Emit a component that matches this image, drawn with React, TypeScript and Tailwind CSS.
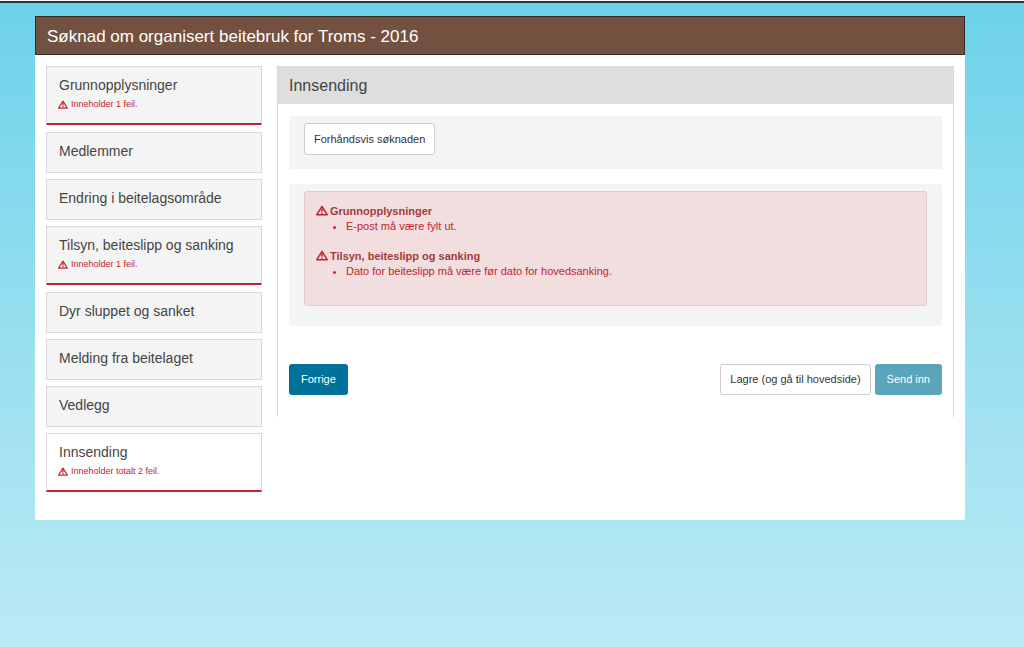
import React, { FC } from "react"

interface ISection {
  title: string
  error?: string
  active?: boolean
}

interface IErrorGroup {
  title: string
  messages: string[]
}

const sections: ISection[] = [
  { title: "Grunnopplysninger", error: "Inneholder 1 feil." },
  { title: "Medlemmer" },
  { title: "Endring i beitelagsområde" },
  { title: "Tilsyn, beiteslipp og sanking", error: "Inneholder 1 feil." },
  { title: "Dyr sluppet og sanket" },
  { title: "Melding fra beitelaget" },
  { title: "Vedlegg" },
  { title: "Innsending", error: "Inneholder totalt 2 feil.", active: true },
]

const errorGroups: IErrorGroup[] = [
  { title: "Grunnopplysninger", messages: ["E-post må være fylt ut."] },
  { title: "Tilsyn, beiteslipp og sanking", messages: ["Dato for beiteslipp må være før dato for hovedsanking."] },
]

const WarningIcon: FC<{ className: string }> = ({ className }) => (
  <svg className={className} viewBox="0 0 12 10" fill="none" stroke="currentColor" aria-hidden="true">
    <path d="M6 1 11.2 9.2H.8z" strokeWidth="1.5" strokeLinejoin="round" />
    <path d="M6 3.2v3M6 6.9v1.4" strokeWidth="1.5" />
  </svg>
)

// one step in the left menu, steps with errors get a red bottom line
const SectionLink: FC<{ section: ISection }> = ({ section }) => {
  const background = section.active ? "bg-white" : "bg-[#f4f4f4]"
  const border = section.error ? "mb-px h-[59px] border-b-2 border-b-[#c4242f]" : "h-[41px]"

  return (
    <a
      href="#"
      aria-current={section.active ? "step" : undefined}
      className={`block border border-[#d8d8d8] px-3 pt-2 ${background} ${border}`}
    >
      <span className="block text-[14px] leading-5 text-[#444]">{section.title}</span>
      {section.error && (
        <span className="flex items-center gap-[3px] text-[9px] leading-[19px] text-[#c4242f]">
          <WarningIcon className="-ml-px h-[9px] w-[10px]" />
          {section.error}
        </span>
      )}
    </a>
  )
}

const App: FC = () => {
  return (
    <div className="min-h-screen bg-linear-to-b from-[#6bd2ea] to-[#bbeaf5] font-['Liberation_Sans',Arial,sans-serif] text-[11px] text-[#333]">
      <div className="h-[3px] border-t border-white bg-[#26373a]" />

      <div className="mt-[13px] mr-[59px] ml-[35px] bg-white">
        <header className="border border-[#3a2a24] bg-[#735141] px-[11px] pt-2 pb-[6px]">
          <h1 className="text-[17px] leading-[23px] text-white">Søknad om organisert beitebruk for Troms - 2016</h1>
        </header>

        <div className="flex items-start gap-[15px] px-[11px] pt-[11px] pb-[27px]">
          <nav className="flex w-[216px] shrink-0 flex-col gap-[6px]">
            {sections.map((section) => (
              <SectionLink key={section.title} section={section} />
            ))}
          </nav>

          <main className="min-w-0 flex-1 border-x border-[#d8d8d8]">
            <h2 className="bg-[#dedede] px-[11px] pt-2 pb-[6px] text-[16px] leading-6 text-[#444]">Innsending</h2>

            <div className="px-[11px] pt-3 pb-[22px]">
              <div className="rounded-xs bg-[#f4f4f4] px-[15px] pt-[7px] pb-[14px]">
                <button type="button" className="block h-8 rounded-[3px] border border-[#ccc] bg-white px-[9px]">
                  Forhåndsvis søknaden
                </button>
              </div>

              <div className="mt-[15px] rounded-xs bg-[#f4f4f4] px-[15px] pt-[7px] pb-5">
                <div role="alert" className="rounded-[3px] border border-[#e8c8cd] bg-[#f2dede] px-[11px] pt-3 pb-[11px] leading-[15px] text-[#c4242f]">
                  {errorGroups.map((group) => (
                    <div key={group.title} className="pb-[15px]">
                      <h3 className="flex items-start gap-[2px] font-bold text-[#a33c3c]">
                        <WarningIcon className="mt-px h-[11px] w-3 text-[#c4242f]" />
                        {group.title}
                      </h3>
                      <ul className="list-disc pl-[30px]">
                        {group.messages.map((message) => (
                          <li key={message}>{message}</li>
                        ))}
                      </ul>
                    </div>
                  ))}
                </div>
              </div>

              <div className="mt-[38px] flex items-center gap-1">
                <button type="button" className="mr-auto h-[31px] rounded-[3px] bg-[#007299] px-3 text-white">
                  Forrige
                </button>
                <button type="button" className="h-[31px] rounded-[3px] border border-[#ccc] bg-white px-[9px]">
                  Lagre (og gå til hovedside)
                </button>
                <button type="button" disabled className="h-[31px] rounded-[3px] bg-[#5aa4bc] px-3 text-white">
                  Send inn
                </button>
              </div>
            </div>
          </main>
        </div>
      </div>
    </div>
  )
}

export default App
